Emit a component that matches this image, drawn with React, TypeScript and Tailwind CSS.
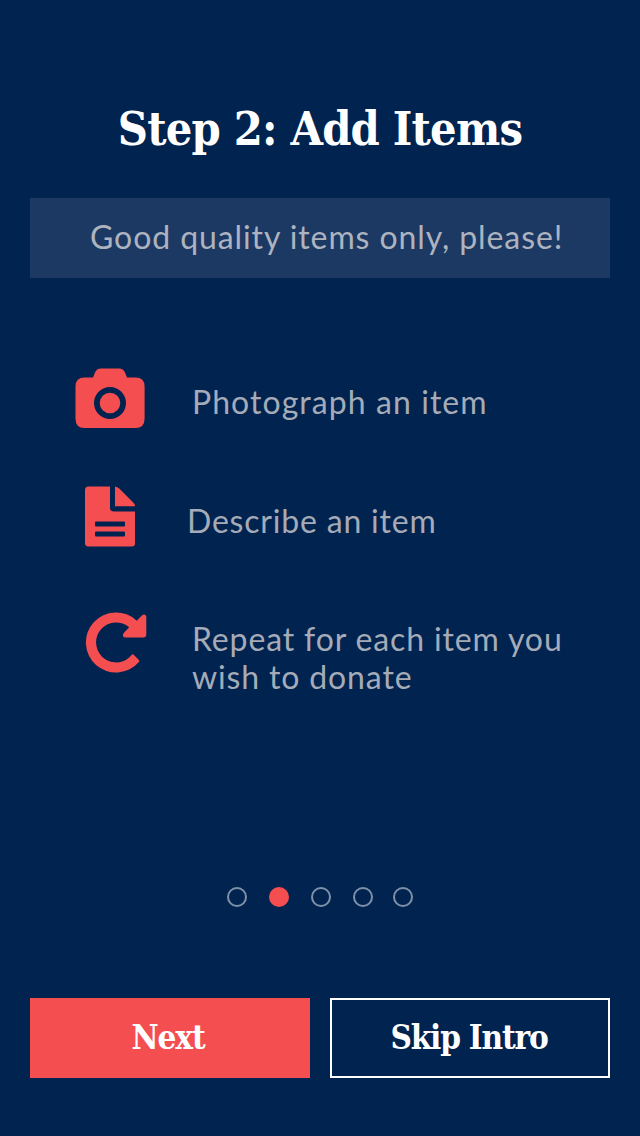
function CameraIcon() {
  return (
    <svg viewBox="0 0 70 60" className="h-[60px] w-[70px] fill-[#f54e50]">
      <path
        fillRule="evenodd"
        d="M9.5 9.6H18L20 4.4Q21.700 .5 26 .5H44Q48.300 .5 50 4.400L52 9.600H60.500Q69.600 9.600 69.600 18.700V50.500Q69.600 60 60.500 60H9.500Q.5 60 .5 50.500V18.700Q.5 9.600 9.500 9.600ZM35 19A16 16 0 1 0 35 51A16 16 0 1 0 35 19ZM35 24.700A10.300 10.300 0 1 1 35 45.300A10.300 10.300 0 1 1 35 24.700Z"
      />
    </svg>
  );
}

function DocumentIcon() {
  return (
    <svg viewBox="0 0 50 61" className="h-[61px] w-[50px] fill-[#f54e50]">
      <path
        fillRule="evenodd"
        d="M3.500 .5H25V21.500Q25 25.500 29 25.500H50.200V57Q50.200 60.500 46.700 60.500H3.500Q0 60.500 0 57V4Q0 .5 3.500 .5ZM11 35.500Q10 35.500 10 36.500V39.500Q10 40.500 11 40.500H39Q40 40.500 40 39.500V36.500Q40 35.500 39 35.500ZM11 45.500Q10 45.500 10 46.500V49.500Q10 50.500 11 50.500H39Q40 50.500 40 49.500V46.500Q40 45.500 39 45.500Z"
      />
      <path d="M30 .5Q32.500 .9 34.500 2.700L48 16.200Q49.900 18 50.200 20.300H30Z" />
    </svg>
  );
}

function RepeatIcon() {
  return (
    <svg viewBox="0 0 62 62" className="size-[62px] fill-[#f54e50]">
      <path d="M51.700 8.700L56.900 3.500C58.900 1.500 61.300 2.500 61.300 5.200V23Q61.300 25.400 58.900 25.400H40.300C37.500 25.400 37.200 22.800 39 20.800L44.200 15.300A20 20 0 1 0 44.500 45.200L46.700 42.800Q47.700 41.900 48.700 42.800L53.900 48.100Q54.700 49 53.900 50A30.100 30.100 0 1 1 51.700 8.700Z" />
    </svg>
  );
}

const SLAB = "font-['DejaVu_Serif_Condensed','DejaVu_Serif',serif] font-bold [font-stretch:condensed]";

export default function App() {
  return (
    <main className="flex h-[1136px] w-[640px] flex-col bg-[#002350] px-[30px] font-['Lato','Liberation_Sans',sans-serif] text-[32px] leading-[38px] text-[#a5abb7]">
      <h1 className={`mt-[99px] text-center text-[46.5px] leading-[60px] tracking-[-0.8px] whitespace-nowrap text-white ${SLAB}`}>
        Step 2: Add Items
      </h1>
      <p className="mt-[39px] flex h-20 items-center bg-[#1c3964] pb-0.5 pl-[60px] text-[#adb3bf]">
        <span className="tracking-[0.91px] whitespace-nowrap">Good quality items only, please!</span>
      </p>

      <ul className="mt-[90px] flex h-[330px] flex-col">
        <li className="flex items-start">
          <span className="w-[162px] shrink-0 pl-[45px]"><CameraIcon /></span>
          <span className="mt-[15px] tracking-[1.07px]">Photograph an item</span>
        </li>
        <li className="mt-[58px] flex items-start">
          <span className="w-[157px] shrink-0 pl-[55px]"><DocumentIcon /></span>
          <span className="mt-4 tracking-[0.8px]">Describe an item</span>
        </li>
        <li className="mt-[65px] flex items-start">
          <span className="w-[162px] shrink-0 pl-[55px]"><RepeatIcon /></span>
          <span className="mt-2 tracking-[0.86px] whitespace-nowrap">
            Repeat for each item you<br />wish to donate
          </span>
        </li>
      </ul>

      <div className="mt-[189px] flex gap-[22px] pl-[197px]">
        <span className="size-5 rounded-full border-2 border-[#7f91a8]" />
        <span className="size-5 rounded-full bg-[#f54e50]" />
        <span className="size-5 rounded-full border-2 border-[#7f91a8]" />
        <span className="size-5 rounded-full border-2 border-[#7f91a8]" />
        <span className="-ml-0.5 size-5 rounded-full border-2 border-[#7f91a8]" />
      </div>

      <div className={`mt-[91px] grid grid-cols-2 gap-5 text-[33px] whitespace-nowrap text-white ${SLAB}`}>
        <button className="h-20 bg-[#f54e50] pr-1 tracking-[-1.1px]">Next</button>
        <button className="h-20 border-2 border-white pr-0.5 tracking-[-1.2px]">Skip Intro</button>
      </div>
    </main>
  );
}
